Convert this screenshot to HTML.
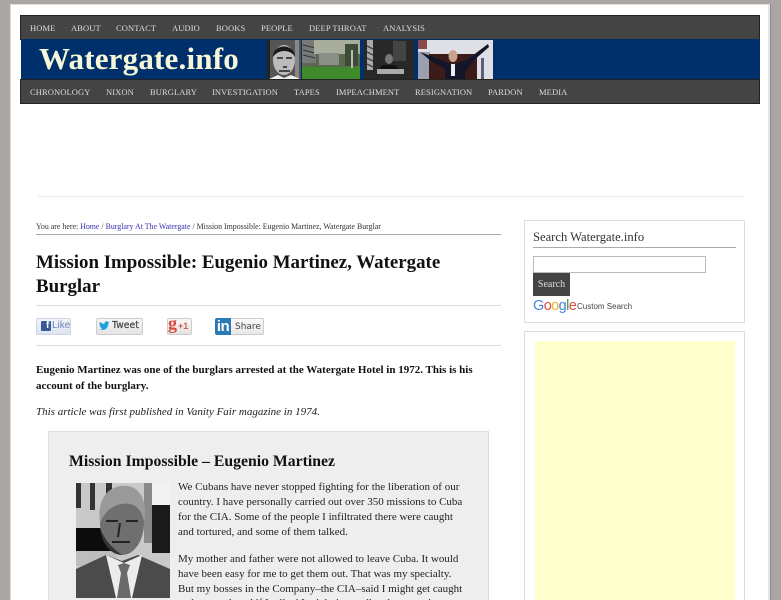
<!DOCTYPE html>
<html><head><meta charset="utf-8"><style>
html,body{margin:0;padding:0;width:781px;height:600px;overflow:hidden;background:#aaa6a3;font-family:"Liberation Serif",serif;color:#111}
#root{position:absolute;left:0;top:0;width:781px;height:600px;overflow:hidden;background:#aaa6a3;filter:blur(.25px)}
div,a,span,input{position:absolute;white-space:nowrap}
a{text-decoration:none}
#wrap{left:10px;top:4px;width:757px;height:596px;background:#fff;border-top:1px solid #ddd;border-left:1px solid #ddd}
#rb{left:768px;top:4px;width:2px;height:596px;background:#e6e6e6;border-right:1px solid #8f8d8b}
.nav{left:20px;width:738px;background:#444;border:1px solid #222}
.nav a{color:#ddd;font-size:8.500px;top:7px;letter-spacing:.1px}
.hr{background:#ddd;height:1px}
.t{color:#222}
.b{height:15px;border:1px solid #ccd;border-radius:2px;background:linear-gradient(#f6f7f9,#e3e6ea)}
</style></head><body><div id="root">
<div id="wrap"></div><div id="rb"></div>

<div class="nav" style="top:15px;height:23px">
<a style="left:9px">HOME</a><a style="left:50px">ABOUT</a><a style="left:95px">CONTACT</a><a style="left:151px">AUDIO</a><a style="left:195px">BOOKS</a><a style="left:240px">PEOPLE</a><a style="left:288px">DEEP THROAT</a><a style="left:362px">ANALYSIS</a>
</div>
<div style="left:21px;top:39px;width:739px;height:40px;background:#00306b"></div>
<div style="left:39px;top:41px;font:bold 31px/36px 'Liberation Serif',serif;color:#f5f7d8;letter-spacing:.2px">Watergate.info</div>

<svg style="position:absolute;left:267px;top:40px" width="226" height="39" viewBox="0 0 226 39">
<rect width="34" height="39" fill="#555"/><rect x="0" width="3" height="39" fill="#222"/><rect x="28" width="4" height="39" fill="#888"/>
<ellipse cx="17" cy="20" rx="11" ry="15" fill="#bbb"/><path d="M6 17C6 3 28 3 28 17C24 9 11 9 6 17Z" fill="#1a1a1a"/><path d="M10 18h6M19 18h6M16 27h4M12 31h11" stroke="#222" stroke-width="1.500"/><path d="M2 39l9-4 6 3 7-3 9 4z" fill="#eee"/>
<rect x="35" width="58" height="39" fill="#59684f"/><rect x="35" y="0" width="14" height="23" fill="#777a78"/><path d="M36 5l12 3M36 10l12 3M36 15l12 3" stroke="#333"/><rect x="47" y="0" width="46" height="14" fill="#a9ad9b"/><rect x="52" y="13" width="20" height="12" fill="#8b8f88"/><rect x="35" y="27" width="58" height="12" fill="#3f8a2a"/><rect x="78" y="4" width="13" height="22" fill="#3c4d34"/><rect x="84" y="10" width="2" height="18" fill="#bbb"/>
<rect x="97" width="50" height="39" fill="#282828"/><rect x="100" width="6" height="30" fill="#aaa"/><path d="M100 6l6 3M100 12l6 3M100 18l6 3M100 24l6 3" stroke="#444" stroke-width="1.500"/><rect x="126" y="1" width="13" height="20" fill="#444"/><ellipse cx="122" cy="19" rx="4" ry="5" fill="#777"/><rect x="110" y="29" width="27" height="5" fill="#aaa"/><path d="M116 25h12l4 4h-20z" fill="#111"/>
<rect x="151" width="75" height="39" fill="#dfe0e5"/><rect x="151" y="12" width="12" height="27" fill="#9aa0b0"/><rect x="162" y="14" width="48" height="25" fill="#3b1c18"/><path d="M153 12l19 7 14 6 15-6 16-12 4-3 1 3-16 14-8 12v6h-20v-10l-14-8z" fill="#15152a"/><ellipse cx="186" cy="16" rx="4.500" ry="6" fill="#c9a38f"/><path d="M184 24h4v12h-4z" fill="#eee"/><rect x="214" y="18" width="3" height="21" fill="#5b5f7a"/><rect x="151" y="0" width="9" height="9" fill="#8a4a4a"/>
</svg>

<div class="nav" style="top:79px;height:23px">
<a style="left:9px">CHRONOLOGY</a><a style="left:85px">NIXON</a><a style="left:129px">BURGLARY</a><a style="left:191px">INVESTIGATION</a><a style="left:273px">TAPES</a><a style="left:315px">IMPEACHMENT</a><a style="left:394px">RESIGNATION</a><a style="left:467px">PARDON</a><a style="left:518px">MEDIA</a>
</div>

<div style="left:38px;top:196px;width:706px;height:1px;background:#e2eeee"></div>

<div style="left:36px;top:221px;font-size:7.900px;line-height:11px;color:#333">You are here: <a style="position:static;color:#3a2fb5">Home</a> / <a style="position:static;color:#3a2fb5">Burglary At The Watergate</a> / Mission Impossible: Eugenio Martinez, Watergate Burglar</div>
<div style="left:36px;top:234px;width:465px;height:1px;background:#aaa"></div>

<div style="left:36px;top:251px;font:bold 18.900px/24px 'Liberation Serif',serif;color:#111">Mission Impossible: Eugenio Martinez, Watergate<br>Burglar</div>
<div class="hr" style="left:36px;top:305px;width:465px"></div>

<!-- share buttons -->
<div class="b" style="left:36px;top:318px;width:33px;border-color:#cdd5e4;background:linear-gradient(#f2f5fa,#dde4f0)"></div>
<div style="left:41px;top:321px;width:10px;height:10px;background:#3b5998;border-radius:1px"></div>
<div style="left:46px;top:320px;font:bold 10px/12px 'Liberation Sans',sans-serif;color:#fff">f</div>
<div style="left:52px;top:320px;font:10px/12px 'Liberation Sans',sans-serif;color:#6d84b4">Like</div>

<div class="b" style="left:96px;top:318px;width:45px;border-color:#ccc;background:linear-gradient(#f7f7f7,#e4e4e4)"></div>
<svg style="position:absolute;left:99px;top:321px" width="11" height="10" viewBox="0 0 11 10"><path d="M0 8c4 2 9 1 9.500-6l1.300-1.200-1.500.3C8.500.2 7 0 6 1 5.400 1.700 5.500 2.500 5.500 3 3.500 3 2 2 .8.800 0 2.500.7 4 1.600 4.500L.6 4.200C.7 5.500 1.500 6.200 2.600 6.500H1.500C2 7.300 2.800 7.600 3.500 7.700 2.500 8.300 1.200 8.300 0 8z" fill="#1f9fdc"/></svg>
<div style="left:112px;top:319px;font:10px/14px 'DejaVu Sans',sans-serif;color:#444;-webkit-text-stroke:.2px #444;transform-origin:left;transform:scaleX(.93)">Tweet</div>

<div class="b" style="left:167px;top:318px;width:23px;border-color:#ccc;background:linear-gradient(#f7f7f7,#e4e4e4)"></div>
<div style="left:168px;top:314px;font:bold 18px/19px 'Liberation Serif',serif;color:#d9493a">g</div>
<div style="left:178px;top:320px;font:bold 9px/12px 'Liberation Sans',sans-serif;color:#c9604f">+1</div>

<div class="b" style="left:215px;top:318px;width:47px;border-color:#ccc;background:linear-gradient(#fafafa,#e8e8e8)"></div>
<div style="left:215px;top:318px;width:16px;height:17px;background:#2a7ab5;border-radius:2px 0 0 2px;color:#fff;font:bold 15px/17px 'Liberation Sans',sans-serif;text-align:center;letter-spacing:-.5px">in</div>
<div style="left:235px;top:320px;font:9px/14px 'DejaVu Sans',sans-serif;color:#444">Share</div>

<div class="hr" style="left:36px;top:345px;width:465px"></div>

<div style="left:36px;top:362px;font:bold 11px/16px 'Liberation Serif',serif;color:#111">Eugenio Martinez was one of the burglars arrested at the Watergate Hotel in 1972. This is his<br>account of the burglary.</div>
<div style="left:36px;top:404px;font:italic 11px/17px 'Liberation Serif',serif;color:#222">This article was first published in Vanity Fair magazine in 1974.</div>

<div style="left:48px;top:431px;width:439px;height:170px;background:#eee;border:1px solid #ddd;border-bottom:0"></div>
<div style="left:69px;top:451px;font:bold 15.750px/22px 'Liberation Serif',serif;color:#111">Mission Impossible – Eugenio Martinez</div>

<svg style="position:absolute;left:76px;top:483px" width="94" height="115" viewBox="0 0 94 115">
<rect width="94" height="115" fill="#c9c9c9"/><rect x="0" y="0" width="5" height="25" fill="#333"/><rect x="14" y="0" width="5" height="27" fill="#333"/><rect x="30" y="0" width="6" height="15" fill="#333"/><rect x="68" y="0" width="8" height="60" fill="#8a8a8a"/><rect x="76" y="20" width="18" height="50" fill="#1a1a1a"/><rect x="76" y="0" width="18" height="22" fill="#f2f2f2"/><rect x="0" y="45" width="35" height="25" fill="#0c0c0c"/><rect x="0" y="68" width="40" height="15" fill="#bdbdbd"/>
<path d="M0 115V86l30-14 16 6 16-6 32 14v29z" fill="#4b4b4b"/>
<path d="M30 72l10 43h16l10-43-18 8z" fill="#ececec"/>
<path d="M42 82l6-2 6 2-3 8 4 25H41l4-25z" fill="#6a6a6a"/>
<ellipse cx="46" cy="40" rx="22" ry="32" fill="#6f6f6f"/>
<path d="M24 40C20 10 38 1 52 3c14 2 20 20 16 36-2-12-8-17-14-18-12-2-24 4-30 19z" fill="#9a9a9a"/>
<path d="M30 38h12M50 38h12M44 40l-2 14M36 59h18" stroke="#222" stroke-width="2"/>
<path d="M24 45c4 18 10 26 22 27-8-6-16-12-22-27z" fill="#333"/>
</svg>

<div class="t" style="left:178px;top:480px;font-size:11px;line-height:15px">We Cubans have never stopped fighting for the liberation of our<br>country. I have personally carried out over 350 missions to Cuba<br>for the CIA. Some of the people I infiltrated there were caught<br>and tortured, and some of them talked.</div>
<div class="t" style="left:178px;top:552px;font-size:11px;line-height:14.800px">My mother and father were not allowed to leave Cuba. It would<br>have been easy for me to get them out. That was my specialty.<br>But my bosses in the Company–the CIA–said I might get caught<br>and tortured, and if I talked I might jeopardize the operation.</div>

<!-- sidebar -->
<div style="left:524px;top:220px;width:219px;height:101px;border:1px solid #ddd;background:#fff"></div>
<div style="left:533px;top:228px;font:12.600px/18px 'Liberation Serif',serif;color:#333">Search Watergate.info</div>
<div style="left:533px;top:247px;width:203px;height:1px;background:#aaa"></div>
<div style="left:533px;top:256px;width:171px;height:15px;border:1px solid #bbb;background:#fff"></div>
<div style="left:533px;top:273px;width:37px;height:23px;background:#444;color:#ddd;font:10px/23px 'Liberation Serif',serif;text-align:center">Search</div>
<div style="left:533px;top:297px;font:14.500px/18px 'Liberation Sans',sans-serif;letter-spacing:-.6px"><span style="position:static;color:#4a80d8">G</span><span style="position:static;color:#d9503f">o</span><span style="position:static;color:#e8b32e">o</span><span style="position:static;color:#4a80d8">g</span><span style="position:static;color:#3a9a50">l</span><span style="position:static;color:#d9503f">e</span></div>
<div style="left:577px;top:301px;font:8px/12px 'Liberation Sans',sans-serif;color:#444">Custom Search</div>

<div style="left:524px;top:331px;width:219px;height:270px;border:1px solid #ddd;background:#fff"></div>
<div style="left:535px;top:341px;width:200px;height:259px;background:#ffffcc"></div>
</div></body></html>
